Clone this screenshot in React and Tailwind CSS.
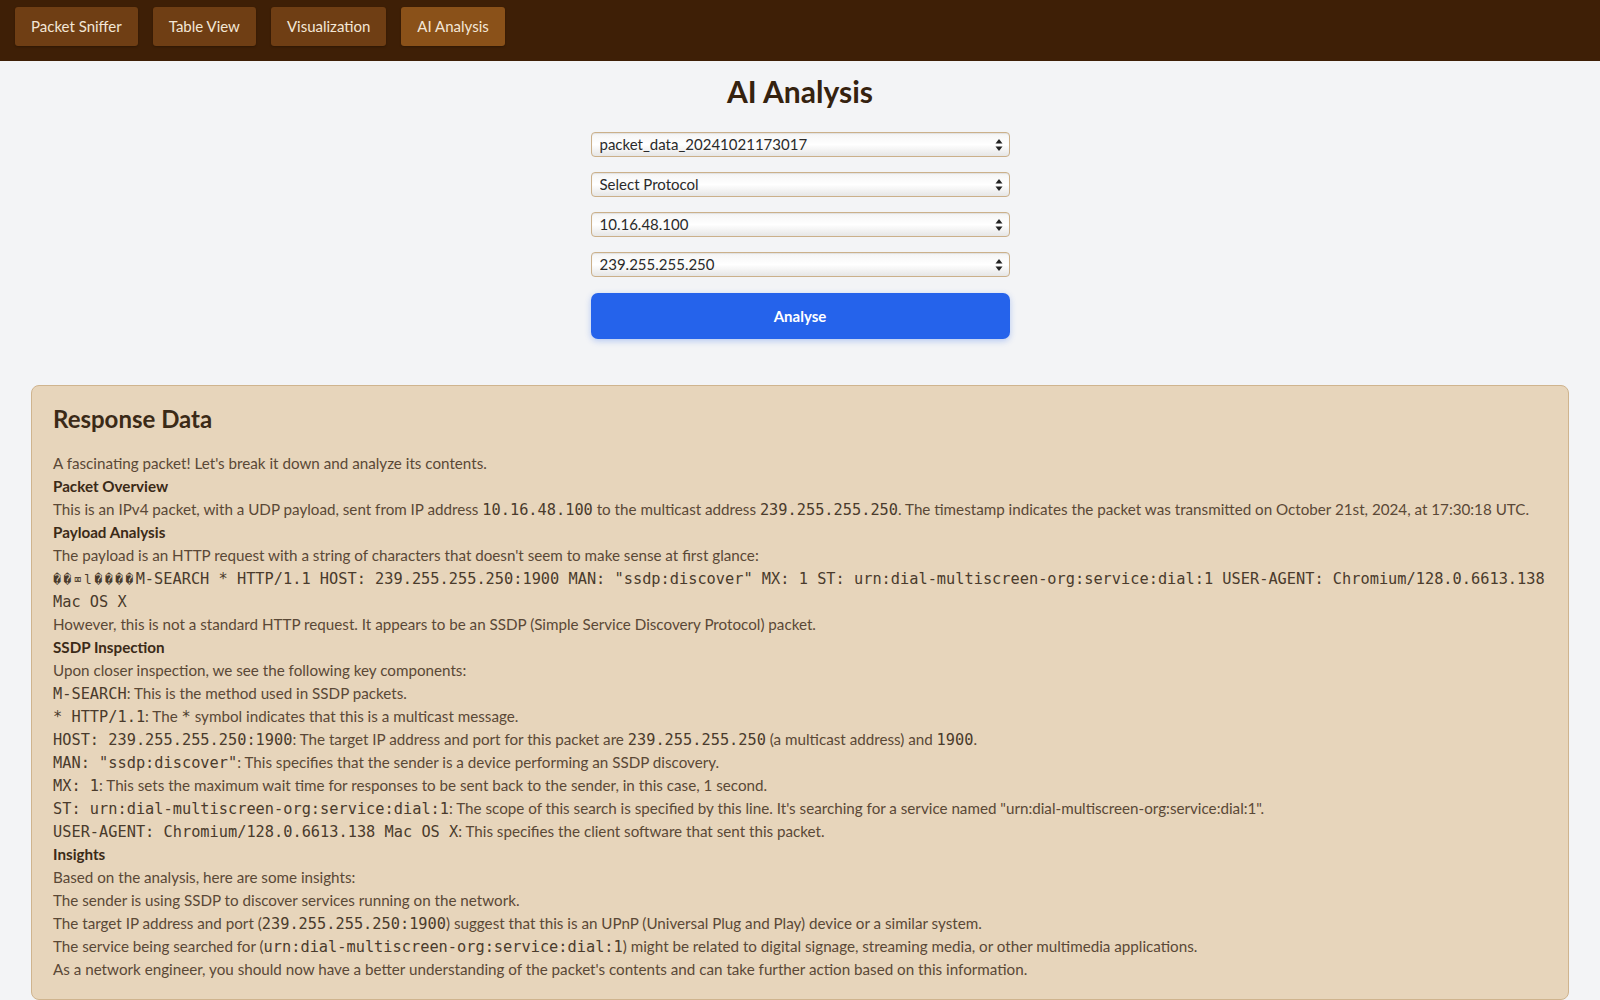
import { useState } from 'react'

const navItems = ['Packet Sniffer', 'Table View', 'Visualization', 'AI Analysis']

const selects = [
  { value: 'packet_data_20241021173017', options: ['packet_data_20241021173017'] },
  { value: 'Select Protocol', options: ['Select Protocol', 'UDP', 'TCP'] },
  { value: '10.16.48.100', options: ['10.16.48.100'] },
  { value: '239.255.255.250', options: ['239.255.255.250'] },
]

const junk = '\uFFFD\uFFFD\u2327l\uFFFD\uFFFD\uFFFD\uFFFD'

function Code({ children }) {
  return <code className="font-['DejaVu_Sans_Mono',monospace] text-[15.3px] leading-[1] text-[#4a3b2c]">{children}</code>
}

function Heading({ children }) {
  return <p className="font-bold text-[#3b2a17]">{children}</p>
}

function UpDown() {
  return (
    <svg width="8" height="13" viewBox="0 0 8 13" className="absolute right-[7px] top-1/2 -translate-y-1/2 pointer-events-none">
      <path d="M4 0.5 L7.5 5 L0.5 5 Z" fill="#222" />
      <path d="M4 12.5 L7.5 8 L0.5 8 Z" fill="#222" />
    </svg>
  )
}

export default function App() {
  const [active, setActive] = useState('AI Analysis')
  const [values, setValues] = useState(selects.map(s => s.value))

  return (
    <div className="min-h-screen bg-[#f3f4f6] font-['Lato','Noto_Sans',sans-serif]">

      {/* ── nav ── */}
      <nav className="h-[61px] bg-[#3e1f06] flex items-start gap-[15px] px-[15px] pt-[7px]">
        {navItems.map(item => (
          <button
            key={item}
            onClick={() => setActive(item)}
            className={`h-[39px] px-[16px] rounded-[3px] text-[15px] text-[#f3e6d6] shadow-[0_1px_2px_rgba(0,0,0,0.25)] ${
              active === item ? 'bg-[#8a5119]' : 'bg-[#6f3e14]'
            }`}
          >
            {item}
          </button>
        ))}
      </nav>

      {/* ── form ── */}
      <h1 className="mt-[12px] text-center text-[30px] leading-[37px] font-bold text-[#35220f]">AI Analysis</h1>

      <div className="w-[419px] mx-auto mt-[22px] flex flex-col gap-[15px]">
        {selects.map((s, i) => (
          <div key={i} className="relative">
            <select
              value={values[i]}
              onChange={e => setValues(v => v.map((x, j) => (j === i ? e.target.value : x)))}
              className="appearance-none w-full h-[25px] pl-[8px] pr-[24px] rounded-[4px] border border-[#cbb08a] bg-gradient-to-b from-[#f4f4f4] via-white to-[#e6e6e6] shadow-[inset_0_1px_1px_rgba(0,0,0,0.08)] text-[15px] text-[#2a2a2a] leading-[23px] outline-none"
            >
              {s.options.map(o => (
                <option key={o}>{o}</option>
              ))}
            </select>
            <UpDown />
          </div>
        ))}
        <button className="mt-[1px] h-[46px] rounded-[7px] bg-[#2563eb] text-white text-[15px] font-bold shadow-[0_2px_6px_rgba(37,99,235,0.3)]">
          Analyse
        </button>
      </div>

      {/* ── response ── */}
      <div className="px-[31px] mt-[46px]">
        <div className="rounded-[8px] border border-[#cfb48e] bg-[#e7d5bb] pl-[21px] pr-[20px] pt-[17px] pb-[18px] text-[15.2px] leading-[23px] text-[#5a4836]">
          <h2 className="text-[24px] leading-[32px] font-bold text-[#3b2a17] mb-[17px]">Response Data</h2>

          <p>A fascinating packet! Let's break it down and analyze its contents.</p>
          <Heading>Packet Overview</Heading>
          <p>
            This is an IPv4 packet, with a UDP payload, sent from IP address <Code>10.16.48.100</Code> to the multicast address{' '}
            <Code>239.255.255.250</Code>. The timestamp indicates the packet was transmitted on October 21st, 2024, at 17:30:18 UTC.
          </p>
          <Heading>Payload Analysis</Heading>
          <p>The payload is an HTTP request with a string of characters that doesn't seem to make sense at first glance:</p>
          <p>
            <Code>
              <span className="text-[13px] tracking-[2.5px]">{junk}</span>
              {'M-SEARCH * HTTP/1.1 HOST: 239.255.255.250:1900 MAN: "ssdp:discover" MX: 1 ST: urn:dial-multiscreen-org:service:dial:1 USER-AGENT: Chromium/128.0.6613.138 Mac OS X'}
            </Code>
          </p>
          <p>However, this is not a standard HTTP request. It appears to be an SSDP (Simple Service Discovery Protocol) packet.</p>
          <Heading>SSDP Inspection</Heading>
          <p>Upon closer inspection, we see the following key components:</p>
          <p><Code>M-SEARCH</Code>: This is the method used in SSDP packets.</p>
          <p><Code>* HTTP/1.1</Code>: The <Code>*</Code> symbol indicates that this is a multicast message.</p>
          <p>
            <Code>HOST: 239.255.255.250:1900</Code>: The target IP address and port for this packet are <Code>239.255.255.250</Code> (a multicast
            address) and <Code>1900</Code>.
          </p>
          <p><Code>MAN: "ssdp:discover"</Code>: This specifies that the sender is a device performing an SSDP discovery.</p>
          <p><Code>MX: 1</Code>: This sets the maximum wait time for responses to be sent back to the sender, in this case, 1 second.</p>
          <p>
            <Code>ST: urn:dial-multiscreen-org:service:dial:1</Code>: The scope of this search is specified by this line. It's searching for a
            service named "urn:dial-multiscreen-org:service:dial:1".
          </p>
          <p><Code>USER-AGENT: Chromium/128.0.6613.138 Mac OS X</Code>: This specifies the client software that sent this packet.</p>
          <Heading>Insights</Heading>
          <p>Based on the analysis, here are some insights:</p>
          <p>The sender is using SSDP to discover services running on the network.</p>
          <p>
            The target IP address and port (<Code>239.255.255.250:1900</Code>) suggest that this is an UPnP (Universal Plug and Play) device or
            a similar system.
          </p>
          <p>
            The service being searched for (<Code>urn:dial-multiscreen-org:service:dial:1</Code>) might be related to digital signage, streaming
            media, or other multimedia applications.
          </p>
          <p>As a network engineer, you should now have a better understanding of the packet's contents and can take further action based on this information.</p>
        </div>
      </div>
    </div>
  )
}
